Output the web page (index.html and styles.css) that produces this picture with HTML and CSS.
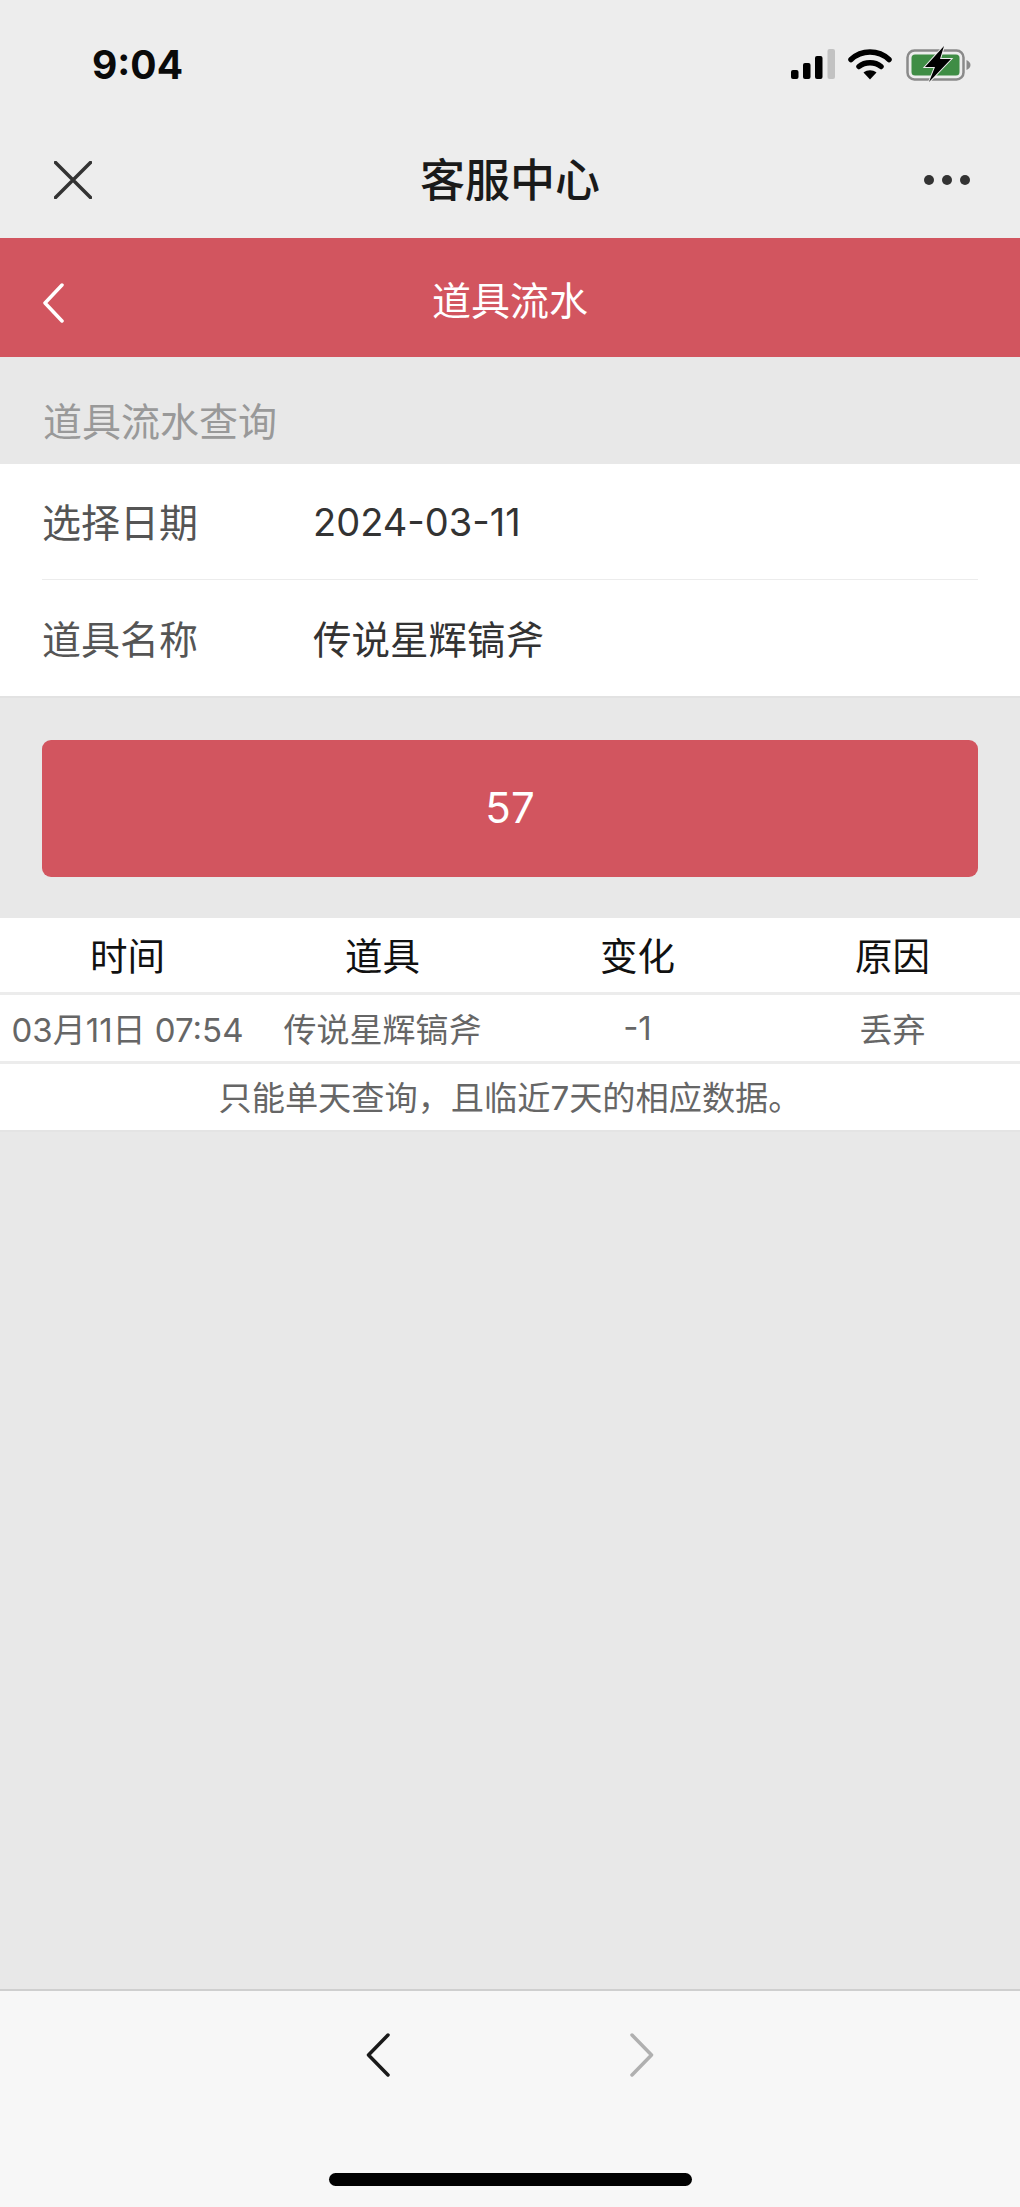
FILE: index.html
```html
<!DOCTYPE html>
<html lang="zh-CN">
<head>
<meta charset="utf-8">
<title>道具流水</title>
<link rel="stylesheet" href="styles.css">
</head>
<body>
<div class="app">
  <header class="chrome">
    <div class="status">
      <span class="clock">9:04</span>
      <div class="status-icons">
        <svg class="i-signal" viewBox="0 0 44 30" width="44" height="30"><rect x="0" y="21" width="7.500" height="9" rx="2" fill="#000"/><rect x="12" y="14" width="7.500" height="16" rx="2" fill="#000"/><rect x="24" y="7" width="7.500" height="23" rx="2" fill="#000"/><rect x="36.500" y="0" width="7.500" height="30" rx="2" fill="#c2c2c2"/></svg>
        <svg class="i-wifi" viewBox="0 0 44 32" width="44" height="32"><path d="M3 11.500C13.500 1.500 30.500 1.500 41 11.500" fill="none" stroke="#000" stroke-width="5.500" stroke-linecap="round"/><path d="M11 18.500C17 13.500 27 13.500 33 18.500" fill="none" stroke="#000" stroke-width="5.500" stroke-linecap="round"/><path d="M15.500 24.500C19.500 21.500 24.500 21.500 28.500 24.500L22 31.500Z" fill="#000"/></svg>
        <svg class="i-battery" viewBox="0 0 66 36" width="66" height="36"><rect x="1.500" y="4.500" width="56" height="29" rx="7" fill="none" stroke="#8a8a8a" stroke-width="2.500"/><rect x="5.500" y="8.500" width="48" height="21" rx="3.500" fill="#3f8d45"/><path d="M60.500 14v10c2.500-1 4-3 4-5s-1.500-4-4-5z" fill="#8a8a8a"/><path d="M38 0 19 21h10l-6 15 22-23H34z" fill="#000" stroke="#ededed" stroke-width="2" paint-order="stroke"/></svg>
      </div>
    </div>
    <div class="topbar">
      <svg class="i-close" viewBox="0 0 38 38" width="38" height="38"><path d="M1.500 1.500 36.500 36.500M36.500 1.500 1.500 36.500" fill="none" stroke="#333" stroke-width="3.500" stroke-linecap="round"/></svg>
      <h1 class="topbar-title">客服中心</h1>
      <div class="dots"><span class="dot"></span><span class="dot"></span><span class="dot"></span></div>
    </div>
  </header>

  <div class="pagebar">
    <svg class="i-back" viewBox="0 0 22 40" width="22" height="40"><path d="M20 2 3 20 20 38" fill="none" stroke="#fff" stroke-width="3.500" stroke-linecap="round" stroke-linejoin="round"/></svg>
    <h2 class="pagebar-title">道具流水</h2>
    <span></span>
  </div>

  <main class="content">
    <p class="section-title">道具流水查询</p>
    <section class="form">
      <div class="form-row"><span class="form-label">选择日期</span><span class="form-value form-date">2024-03-11</span></div>
      <div class="form-row"><span class="form-label">道具名称</span><span class="form-value">传说星辉镐斧</span></div>
    </section>
    <div class="action"><button class="btn" type="button">57</button></div>
    <section class="table">
      <div class="t-row t-head"><span>时间</span><span>道具</span><span>变化</span><span>原因</span></div>
      <div class="t-row t-body"><span>03月11日 07:54</span><span>传说星辉镐斧</span><span>-1</span><span>丢弃</span></div>
      <div class="t-note">只能单天查询，且临近7天的相应数据。</div>
    </section>
  </main>

  <footer class="bottombar">
    <div class="bottom-nav">
      <svg viewBox="0 0 24 44" width="24" height="44"><path d="M22 2 2.500 22 22 42" fill="none" stroke="#1a1a1a" stroke-width="3.500" stroke-linecap="round" stroke-linejoin="round"/></svg>
      <svg viewBox="0 0 24 44" width="24" height="44"><path d="M2 2 21.500 22 2 42" fill="none" stroke="#b0b0b0" stroke-width="3.500" stroke-linecap="round" stroke-linejoin="round"/></svg>
    </div>
    <div class="home-bar"></div>
  </footer>
</div>
</body>
</html>
```
FILE: styles.css
```css
* { box-sizing: border-box; }
html, body { margin: 0; padding: 0; }
body {
  width: 1020px;
  height: 2207px;
  overflow: hidden;
  font-family: Inter, "Noto Sans CJK SC", "Noto Sans", sans-serif;
  background: #e8e8e8;
}
.app { display: flex; flex-direction: column; height: 2207px; }

.chrome { background: #ededed; height: 238px; }
.status {
  display: flex;
  align-items: center;
  justify-content: space-between;
  height: 130px;
  padding: 0 48px 2px 92px;
}
.clock { font-size: 39px; font-weight: 700; color: #0a0a0a; line-height: 1; }
.status-icons { display: flex; align-items: center; gap: 14px; }
.i-signal { margin-right: -1px; }

.topbar {
  display: grid;
  grid-template-columns: 1fr auto 1fr;
  align-items: center;
  height: 100px;
  padding: 0 50px;
}
.i-close { margin-left: 4px; }
.topbar-title { margin: 0; font-size: 45px; font-weight: 500; color: #1a1a1a; line-height: 1; }
.dots { display: flex; gap: 8px; justify-content: flex-end; }
.dot { width: 10px; height: 10px; border-radius: 50%; background: #333; }

.pagebar {
  display: grid;
  grid-template-columns: 1fr auto 1fr;
  align-items: center;
  height: 119px;
  padding: 0 42px;
  background: #d2555f;
}
.i-back { margin-top: 11px; }
.pagebar-title { margin: 0 0 -5px; font-size: 39px; font-weight: 400; color: #fff; line-height: 1; }

.content { flex: 1; }
.section-title {
  margin: 0;
  height: 107px;
  padding: 42px 0 0 43px;
  font-size: 39px;
  line-height: 1.2;
  color: #999;
}
.form { background: #fff; padding-left: 42px; border-bottom: 2px solid #e2e2e2; }
.form-row {
  display: flex;
  align-items: center;
  height: 116px;
  margin-right: 42px;
  font-size: 39px;
}
.form-row:first-child { border-bottom: 1px solid #ececec; }
.form-label { width: 271px; padding-bottom: 3px; color: #555; }
.form-value { padding-bottom: 3px; color: #333; font-size: 38.500px; }
.form-date { padding-bottom: 0; font-size: 38px; }

.action { padding: 42px 42px 41px; }
.btn {
  display: block;
  width: 100%;
  height: 137px;
  padding-bottom: 3px;
  border: 0;
  border-radius: 9px;
  background: #d2555f;
  color: #fff;
  font: inherit;
  font-size: 42px;
}

.table { background: #fff; border-bottom: 2px solid #e4e4e4; }
.t-row {
  display: grid;
  grid-template-columns: repeat(4, 1fr);
  align-items: center;
  justify-items: center;
  white-space: nowrap;
  border-bottom: 3px solid #ececec;
}
.t-head { height: 77px; padding-bottom: 3px; font-size: 37.500px; color: #111; }
.t-body { height: 69px; font-size: 33px; color: #666; }
.t-note {
  height: 66px;
  line-height: 68px;
  text-align: center;
  font-size: 33.200px;
  color: #666;
}

.bottombar {
  display: flex;
  flex-direction: column;
  align-items: center;
  height: 218px;
  background: #f7f7f7;
  border-top: 2px solid #cfcfcf;
}
.bottom-nav {
  display: flex;
  justify-content: space-between;
  width: 288px;
  margin: 42px 0 0 -1px;
}
.home-bar {
  width: 363px;
  height: 13px;
  margin-top: 96px;
  border-radius: 7px;
  background: #000;
}
```
